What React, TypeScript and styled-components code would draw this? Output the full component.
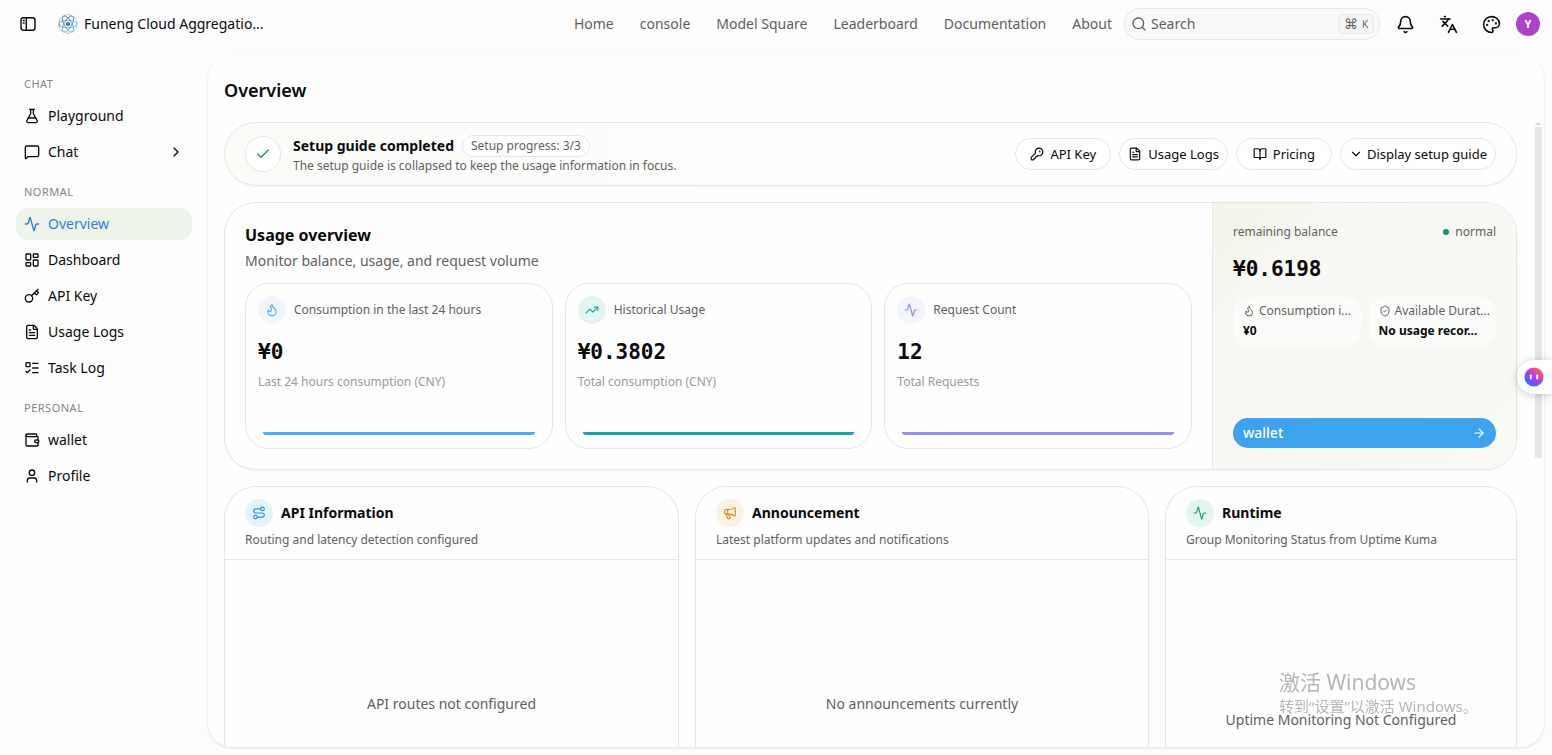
import React from 'react';
import styled, { createGlobalStyle, css } from 'styled-components';
import {
  Activity, ArrowRight, Bell, BookOpen, Check, ChevronDown, ChevronRight, FileText, Flame,
  FlaskConical, Key, KeyRound, Languages, LayoutDashboard, ListTodo, Megaphone, MessageSquare,
  Palette, Route, Search, ShieldCheck, TrendingUp, User, Wallet,
} from 'lucide-react';

const line = '#e6e6e6';
const muted = '#5f5f5f';

const GlobalStyle = createGlobalStyle`
  *, *::before, *::after { box-sizing: border-box; }
  body {
    margin: 0;
    background: #fdfdfd;
    color: #0a0a0a;
    font-family: 'Noto Sans', 'Noto Sans CJK SC', sans-serif;
    font-size: 14px;
    line-height: 20px;
  }
  h1, h2, h3, p, ul { margin: 0; padding: 0; }
  ul { list-style: none; }
  a { color: inherit; text-decoration: none; }
  button { font: inherit; color: inherit; cursor: pointer; }
  svg { flex: none; }
`;

const Page = styled.div`
  display: flex;
  flex-direction: column;
  height: 100vh;
  overflow: hidden;
`;

const Header = styled.header`
  display: flex;
  align-items: center;
  flex: none;
  height: 48px;
  padding: 0 12px 0 16px;
`;

const IconButton = styled.button`
  display: grid;
  place-items: center;
  width: 24px;
  height: 24px;
  padding: 0;
  border: 0;
  background: none;
`;

const Brand = styled.a`
  display: flex;
  align-items: center;
  gap: 6px;
  margin-left: 18px;
`;

const TopNav = styled.nav`
  display: flex;
  gap: 26px;
  margin-left: auto;
  margin-right: 12px;
  color: ${muted};
`;

const SearchBox = styled.label`
  display: flex;
  align-items: center;
  gap: 4px;
  width: 256px;
  height: 32px;
  padding: 0 5px 0 6px;
  border: 1px solid ${line};
  border-radius: 16px;
  background: #fafafa;
  color: ${muted};
`;

const SearchInput = styled.input`
  flex: 1;
  min-width: 0;
  padding: 0;
  border: 0;
  outline: 0;
  background: none;
  font: inherit;
  &::placeholder { color: ${muted}; opacity: 1; }
`;

const Shortcut = styled.kbd`
  display: flex;
  align-items: center;
  justify-content: center;
  gap: 4px;
  width: 36px;
  height: 20px;
  border: 1px solid ${line};
  border-radius: 4px;
  background: #f5f5f5;
  font-family: 'Noto Sans', sans-serif;
  font-size: 10px;
`;

const Command = styled.span`
  font-family: 'DejaVu Sans', sans-serif;
  font-size: 14px;
`;

const Tools = styled.div`
  display: flex;
  align-items: center;
  gap: 19px;
  margin: 0 13px;
`;

const Avatar = styled.button`
  width: 24px;
  height: 24px;
  padding: 0;
  border: 0;
  border-radius: 50%;
  background: #ab43c8;
  color: #fff;
  font-size: 11px;
  font-weight: 700;
`;

const Body = styled.div`
  display: flex;
  flex: 1;
  min-height: 0;
`;

const Sidebar = styled.aside`
  flex: none;
  width: 208px;
  padding: 20px 16px;
`;

const NavTitle = styled.h2`
  height: 32px;
  padding: 0 8px;
  color: #858585;
  font-size: 11px;
  font-weight: 400;
  line-height: 32px;
  letter-spacing: 0.5px;
`;

const NavList = styled.ul`
  display: flex;
  flex-direction: column;
  gap: 4px;
  margin-bottom: 8px;
`;

const NavLink = styled.a<{ $active?: boolean }>`
  display: flex;
  align-items: center;
  gap: 8px;
  height: 32px;
  padding: 0 8px;
  border-radius: 12px;
  ${({ $active }) => $active && css`
    background: #eff4eb;
    color: #2f7be6;
  `}
  > svg:last-child:not(:first-child) { margin-left: auto; }
`;

const Main = styled.main`
  display: flex;
  flex: 1;
  flex-direction: column;
  min-width: 0;
  margin: 8px 8px 8px 0;
  padding: 0 1px 0 16px;
  overflow: hidden;
  border-radius: 24px;
  background: #fefefe;
  box-shadow: 0 1px 3px rgba(0, 0, 0, 0.12);
`;

const PageTitle = styled.h1`
  flex: none;
  height: 66px;
  padding-top: 22px;
  font-size: 18px;
  font-weight: 600;
  line-height: 24px;
`;

const Scroller = styled.div`
  display: flex;
  flex: 1;
  min-height: 0;
  gap: 16px;
`;

const Content = styled.div`
  display: flex;
  flex: 1;
  flex-direction: column;
  gap: 16px;
  min-width: 0;
`;

const ScrollTrack = styled.div`
  display: flex;
  flex: none;
  flex-direction: column;
  align-items: center;
  gap: 2px;
  width: 10px;
`;

const ScrollArrow = styled.span`
  border: 3px solid transparent;
  border-top-width: 0;
  border-bottom-color: #d4d4d4;
`;

const ScrollThumb = styled.span`
  width: 7px;
  height: 53%;
  background: #e5e5e5;
`;

const Guide = styled.section`
  display: flex;
  align-items: center;
  flex: none;
  gap: 12px;
  height: 64px;
  padding: 0 20px;
  border: 1px solid ${line};
  border-radius: 32px;
  background: linear-gradient(90deg, #fbfbf8, #fefefe 55%);
  box-shadow: 0 1px 2px rgba(0, 0, 0, 0.04);
`;

const GuideMark = styled.span`
  display: grid;
  place-items: center;
  width: 36px;
  height: 36px;
  border: 1px solid ${line};
  border-radius: 50%;
  background: #fff;
  color: #16976a;
`;

const GuideText = styled.div`
  padding-top: 2px;
`;

const GuideHead = styled.div`
  display: flex;
  align-items: center;
  gap: 8px;
  height: 22px;
`;

const GuideTitle = styled.h2`
  font-size: 14px;
  font-weight: 700;
  line-height: 20px;
`;

const Pill = styled.span`
  padding: 0 8px;
  border: 1px solid ${line};
  border-radius: 11px;
  background: #fff;
  color: ${muted};
  font-size: 12px;
`;

const Small = styled.p<{ $faint?: boolean }>`
  color: ${({ $faint }) => ($faint ? '#9b9b9b' : muted)};
  font-size: 12px;
  line-height: 18px;
`;

const GuideActions = styled.div`
  display: flex;
  gap: 8px;
  margin-left: auto;
`;

const ActionButton = styled.button<{ $tight?: boolean }>`
  display: flex;
  align-items: center;
  justify-content: center;
  gap: ${({ $tight }) => ($tight ? '4px' : '6px')};
  min-width: 96px;
  height: 32px;
  padding: 0 8px;
  border: 1px solid ${line};
  border-radius: 16px;
  background: #fff;
  font-size: 13px;
`;

const Usage = styled.section`
  display: grid;
  flex: none;
  grid-template-columns: minmax(0, 1fr) 304px;
  height: 268px;
  overflow: hidden;
  border: 1px solid ${line};
  border-radius: 32px;
  background: #fefefe;
  box-shadow: 0 1px 2px rgba(0, 0, 0, 0.04);
`;

const UsageMain = styled.div`
  padding: 20px;
`;

const UsageTitle = styled.h2`
  font-size: 16px;
  font-weight: 700;
  line-height: 24px;
`;

const UsageLead = styled.p`
  margin: 4px 0 12px;
  color: ${muted};
`;

const Stats = styled.div`
  display: grid;
  grid-template-columns: repeat(3, minmax(0, 1fr));
  gap: 12px;
`;

const Stat = styled.article`
  display: flex;
  flex-direction: column;
  height: 166px;
  padding: 12px;
  border: 1px solid ${line};
  border-radius: 24px;
`;

const StatHead = styled.div`
  display: flex;
  align-items: center;
  gap: 8px;
`;

const RoundIcon = styled.span<{ $tint: string; $ink: string }>`
  display: grid;
  place-items: center;
  flex: none;
  width: 28px;
  height: 28px;
  border-radius: 50%;
  background: ${({ $tint }) => $tint};
  color: ${({ $ink }) => $ink};
`;

const Amount = styled.p`
  font-family: 'DejaVu Sans Mono', monospace;
  font-size: 21px;
  font-weight: 700;
  line-height: 28px;
`;

const StatAmount = styled(Amount)`
  margin: 14px 0 7px;
`;

const Trend = styled.span<{ $ink: string }>`
  height: 3px;
  margin: auto 5px 1px;
  border-radius: 0 0 3px 3px;
  background: ${({ $ink }) => $ink};
`;

const Balance = styled.aside`
  display: flex;
  flex-direction: column;
  padding: 20px 20px 21px;
  border-left: 1px solid ${line};
  background: linear-gradient(135deg, #f1f4e8, #f8f9f5 30%, #f7f8f4 70%, #f9faf5);
`;

const BalanceHead = styled.div`
  display: flex;
  align-items: center;
  justify-content: space-between;
`;

const Status = styled.span`
  display: flex;
  align-items: center;
  gap: 6px;
  color: ${muted};
  font-size: 12px;
  line-height: 16px;
  &::before {
    content: '';
    width: 6px;
    height: 6px;
    border-radius: 50%;
    background: #10986a;
  }
`;

const BalanceAmount = styled(Amount)`
  margin: 14px 0;
`;

const Facts = styled.div`
  display: grid;
  grid-template-columns: repeat(2, minmax(0, 1fr));
  gap: 8px;
`;

const Fact = styled.div`
  display: flex;
  flex-direction: column;
  gap: 2px;
  height: 50px;
  padding: 5px 10px;
  border-radius: 16px;
  background: rgba(255, 255, 255, 0.6);
  font-size: 12px;
  line-height: 18px;
  white-space: nowrap;
`;

const FactLabel = styled.div`
  display: flex;
  align-items: center;
  gap: 4px;
  color: ${muted};
`;

const FactValue = styled.strong`
  font-weight: 700;
`;

const WalletButton = styled.button`
  display: flex;
  align-items: center;
  justify-content: space-between;
  height: 30px;
  margin-top: auto;
  padding: 0 10px;
  border: 0;
  border-radius: 15px;
  background: #3ea2ee;
  color: #fff;
  font-weight: 500;
`;

const Panels = styled.div`
  display: grid;
  flex: 1;
  grid-template-columns: 455fr 454fr 352fr;
  gap: 16px;
  min-height: 0;
`;

const Panel = styled.section`
  display: flex;
  flex-direction: column;
  min-width: 0;
  border: 1px solid ${line};
  border-bottom: 0;
  border-radius: 32px 32px 0 0;
  background: #fefefe;
`;

const PanelHead = styled.div`
  height: 73px;
  padding: 12px 20px;
  border-bottom: 1px solid ${line};
`;

const PanelTitle = styled.h3`
  display: flex;
  align-items: center;
  gap: 8px;
  margin-bottom: 4px;
  font-size: 14px;
  font-weight: 700;
`;

const Empty = styled.p<{ $low?: boolean }>`
  padding-top: ${({ $low }) => ($low ? '150px' : '134px')};
  color: ${muted};
  text-align: center;
`;

const Assistant = styled.button`
  position: fixed;
  top: 360px;
  right: 0;
  display: flex;
  align-items: center;
  width: 35px;
  height: 34px;
  padding: 0 0 0 7px;
  border: 0;
  border-radius: 17px 0 0 17px;
  background: #fff;
  box-shadow: 0 1px 8px rgba(0, 0, 0, 0.22);
`;

const Watermark = styled.div`
  position: fixed;
  right: 71px;
  bottom: 39px;
  width: 202px;
  color: rgba(110, 110, 110, 0.5);
  font-size: 15px;
  line-height: 20px;
  white-space: nowrap;
  pointer-events: none;
`;

const WatermarkTitle = styled.p`
  font-size: 21px;
  line-height: 28px;
`;

const SidebarIcon = () => (
  <svg width="16" height="16" viewBox="0 0 16 16" fill="none" stroke="currentColor" strokeWidth="1.4" strokeLinecap="round">
    <rect x="1" y="1.7" width="14" height="12.6" rx="2.6" />
    <path d="M6.3 1.7v12.6M3.4 4.5h.8M3.4 7h.8" />
  </svg>
);

const Logo = () => (
  <svg width="20" height="20" viewBox="0 0 20 20" fill="none" strokeWidth="0.7">
    <defs>
      <linearGradient id="logo-ink" x1="0" x2="20" y1="0" y2="0" gradientUnits="userSpaceOnUse">
        <stop stopColor="#5748b0" />
        <stop offset="1" stopColor="#45b5ee" />
      </linearGradient>
    </defs>
    <g stroke="url(#logo-ink)">
      <circle cx="10" cy="10" r="9.2" strokeDasharray="5 1" strokeOpacity="0.7" />
      {[0, 60, 120].map((turn) => (
        <ellipse key={turn} cx="10" cy="10" rx="9" ry="3.8" transform={`rotate(${turn} 10 10)`} />
      ))}
    </g>
    <circle cx="10" cy="10" r="2" fill="#2277cc" />
  </svg>
);

const AssistantFace = () => (
  <svg width="20" height="20" viewBox="0 0 20 20">
    <defs>
      <linearGradient id="face-fill" x1="4" x2="16" y1="17" y2="3" gradientUnits="userSpaceOnUse">
        <stop stopColor="#2d6bff" />
        <stop offset="0.5" stopColor="#b43cf0" />
        <stop offset="1" stopColor="#ff5a5f" />
      </linearGradient>
    </defs>
    <circle cx="10" cy="10" r="9.5" fill="url(#face-fill)" />
    <path d="M6.8 8.4v3.2M13.2 8.4v3.2" stroke="#fff" strokeWidth="2" strokeLinecap="round" />
  </svg>
);

const navGroups = [
  { title: 'CHAT', items: [
    { label: 'Playground', icon: FlaskConical },
    { label: 'Chat', icon: MessageSquare, nested: true },
  ] },
  { title: 'NORMAL', items: [
    { label: 'Overview', icon: Activity, active: true },
    { label: 'Dashboard', icon: LayoutDashboard },
    { label: 'API Key', icon: Key },
    { label: 'Usage Logs', icon: FileText },
    { label: 'Task Log', icon: ListTodo },
  ] },
  { title: 'PERSONAL', items: [
    { label: 'wallet', icon: Wallet },
    { label: 'Profile', icon: User },
  ] },
] as { title: string; items: { label: string; icon: typeof Key; nested?: boolean; active?: boolean }[] }[];

const stats = [
  { label: 'Consumption in the last 24 hours', value: '¥0', note: 'Last 24 hours consumption (CNY)', icon: Flame, tint: '#eff6ff', ink: '#56a8fb' },
  { label: 'Historical Usage', value: '¥0.3802', note: 'Total consumption (CNY)', icon: TrendingUp, tint: '#e3f5f3', ink: '#18a5a7' },
  { label: 'Request Count', value: '12', note: 'Total Requests', icon: Activity, tint: '#f4f4fe', ink: '#9290ea' },
];

const panels = [
  { title: 'API Information', note: 'Routing and latency detection configured', empty: 'API routes not configured', icon: Route, tint: '#e5f3fc', ink: '#2e8fd8' },
  { title: 'Announcement', note: 'Latest platform updates and notifications', empty: 'No announcements currently', icon: Megaphone, tint: '#faf3e3', ink: '#d68c1c' },
  { title: 'Runtime', note: 'Group Monitoring Status from Uptime Kuma', empty: 'Uptime Monitoring Not Configured', icon: Activity, tint: '#e3f5ee', ink: '#199d72', low: true },
];

export default function App() {
  return (
    <>
      <GlobalStyle />
      <Page>
        <Header>
          <IconButton aria-label="Toggle sidebar"><SidebarIcon /></IconButton>
          <Brand href="#"><Logo />Funeng Cloud Aggregatio...</Brand>
          <TopNav>
            {['Home', 'console', 'Model Square', 'Leaderboard', 'Documentation', 'About'].map((item) => (
              <a key={item} href="#">{item}</a>
            ))}
          </TopNav>
          <SearchBox>
            <Search size={16} />
            <SearchInput type="text" placeholder="Search" aria-label="Search" />
            <Shortcut><Command>⌘</Command>K</Shortcut>
          </SearchBox>
          <Tools>
            <IconButton aria-label="Notifications"><Bell size={19} /></IconButton>
            <IconButton aria-label="Language"><Languages size={19} /></IconButton>
            <IconButton aria-label="Theme"><Palette size={19} /></IconButton>
          </Tools>
          <Avatar aria-label="Account">Y</Avatar>
        </Header>
        <Body>
          <Sidebar>
            {navGroups.map((group) => (
              <nav key={group.title} aria-label={group.title}>
                <NavTitle>{group.title}</NavTitle>
                <NavList>
                  {group.items.map(({ label, icon: Icon, nested, active }) => (
                    <li key={label}>
                      <NavLink href="#" $active={active}>
                        <Icon size={16} />
                        {label}
                        {nested && <ChevronRight size={16} />}
                      </NavLink>
                    </li>
                  ))}
                </NavList>
              </nav>
            ))}
          </Sidebar>
          <Main>
            <PageTitle>Overview</PageTitle>
            <Scroller>
              <Content>
                <Guide>
                  <GuideMark><Check size={16} /></GuideMark>
                  <GuideText>
                    <GuideHead>
                      <GuideTitle>Setup guide completed</GuideTitle>
                      <Pill>Setup progress: 3/3</Pill>
                    </GuideHead>
                    <Small>The setup guide is collapsed to keep the usage information in focus.</Small>
                  </GuideText>
                  <GuideActions>
                    <ActionButton><KeyRound size={14} />API Key</ActionButton>
                    <ActionButton><FileText size={14} />Usage Logs</ActionButton>
                    <ActionButton><BookOpen size={14} />Pricing</ActionButton>
                    <ActionButton $tight><ChevronDown size={14} />Display setup guide</ActionButton>
                  </GuideActions>
                </Guide>
                <Usage>
                  <UsageMain>
                    <UsageTitle>Usage overview</UsageTitle>
                    <UsageLead>Monitor balance, usage, and request volume</UsageLead>
                    <Stats>
                      {stats.map(({ label, value, note, icon: Icon, tint, ink }) => (
                        <Stat key={label}>
                          <StatHead>
                            <RoundIcon $tint={tint} $ink={ink}><Icon size={14} /></RoundIcon>
                            <Small>{label}</Small>
                          </StatHead>
                          <StatAmount>{value}</StatAmount>
                          <Small $faint>{note}</Small>
                          <Trend $ink={ink} />
                        </Stat>
                      ))}
                    </Stats>
                  </UsageMain>
                  <Balance>
                    <BalanceHead>
                      <Small>remaining balance</Small>
                      <Status>normal</Status>
                    </BalanceHead>
                    <BalanceAmount>¥0.6198</BalanceAmount>
                    <Facts>
                      <Fact>
                        <FactLabel><Flame size={12} />Consumption i...</FactLabel>
                        <FactValue>¥0</FactValue>
                      </Fact>
                      <Fact>
                        <FactLabel><ShieldCheck size={12} />Available Durat...</FactLabel>
                        <FactValue>No usage recor...</FactValue>
                      </Fact>
                    </Facts>
                    <WalletButton>wallet<ArrowRight size={14} /></WalletButton>
                  </Balance>
                </Usage>
                <Panels>
                  {panels.map(({ title, note, empty, icon: Icon, tint, ink, low }) => (
                    <Panel key={title}>
                      <PanelHead>
                        <PanelTitle>
                          <RoundIcon $tint={tint} $ink={ink}><Icon size={14} /></RoundIcon>
                          {title}
                        </PanelTitle>
                        <Small>{note}</Small>
                      </PanelHead>
                      <Empty $low={low}>{empty}</Empty>
                    </Panel>
                  ))}
                </Panels>
              </Content>
              <ScrollTrack aria-hidden="true"><ScrollArrow /><ScrollThumb /></ScrollTrack>
            </Scroller>
          </Main>
        </Body>
      </Page>
      <Assistant aria-label="Assistant"><AssistantFace /></Assistant>
      <Watermark>
        <WatermarkTitle>激活 Windows</WatermarkTitle>
        转到“设置”以激活 Windows。
      </Watermark>
    </>
  );
}
